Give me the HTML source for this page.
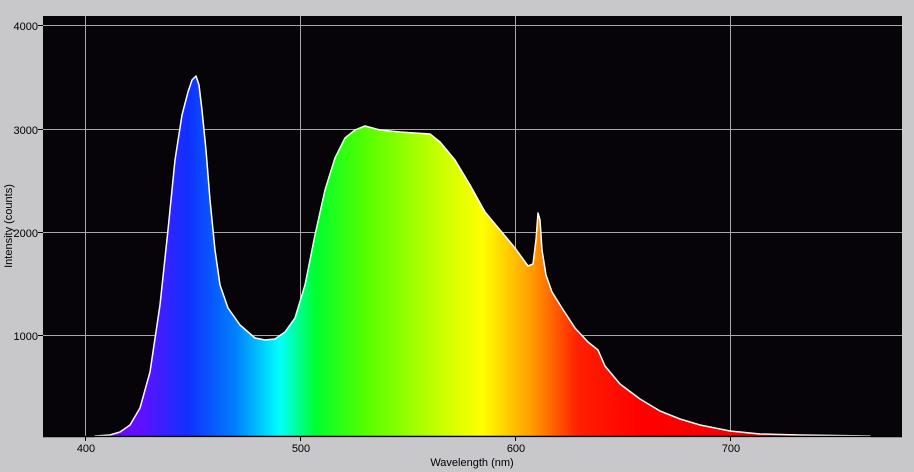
<!DOCTYPE html><html><head><style>body{margin:0;width:914px;height:472px;background:#c8c7c9;overflow:hidden}svg{display:block;font-family:"Liberation Sans",sans-serif}</style></head><body>
<svg width="914" height="472" viewBox="0 0 914 472">
<defs><linearGradient id="g" gradientUnits="userSpaceOnUse" x1="85" y1="0" x2="880" y2="0">
<stop offset="0" stop-color="#7a00ff"/>
<stop offset="0.07" stop-color="#6010ff"/>
<stop offset="0.13" stop-color="#1030ff"/>
<stop offset="0.19" stop-color="#0080ff"/>
<stop offset="0.245" stop-color="#00ffff"/>
<stop offset="0.29" stop-color="#00ff30"/>
<stop offset="0.35" stop-color="#50ff00"/>
<stop offset="0.44" stop-color="#c0ff00"/>
<stop offset="0.50" stop-color="#ffff00"/>
<stop offset="0.56" stop-color="#ffa000"/>
<stop offset="0.62" stop-color="#ff2000"/>
<stop offset="0.70" stop-color="#ff0000"/>
<stop offset="1" stop-color="#e00000"/>
</linearGradient></defs>
<rect x="43" y="16" width="859" height="421" fill="#060408"/>
<g stroke="#a8a8a8" stroke-width="1">
<line x1="43" y1="25.5" x2="902" y2="25.5"/><line x1="43" y1="129.5" x2="902" y2="129.5"/><line x1="43" y1="232.5" x2="902" y2="232.5"/><line x1="43" y1="335.5" x2="902" y2="335.5"/>
<line x1="85.5" y1="16" x2="85.5" y2="437"/><line x1="300.5" y1="16" x2="300.5" y2="437"/><line x1="515.5" y1="16" x2="515.5" y2="437"/><line x1="730.5" y1="16" x2="730.5" y2="437"/>
</g>
<path d="M95 436 L110 435 L120 432 L130 425 L140 408 L150 372 L160 305 L168 230 L175 160 L182 115 L188 92 L192 80 L196 76 L199 85 L202 110 L206 150 L210 200 L215 250 L220 285 L228 308 L240 325 L255 338 L265 340 L275 339 L285 332 L295 318 L305 285 L315 235 L325 190 L335 158 L345 138 L355 130 L365 126 L380 130 L400 132 L430 134 L440 142 L455 160 L470 185 L485 212 L500 230 L515 248 L528 266 L533 264 L536 240 L538 213 L540 220 L542 250 L546 275 L552 292 L562 308 L575 328 L588 342 L598 350 L605 366 L620 384 L640 399 L660 411 L680 419 L700 425 L730 431 L760 434 L800 435 L870 436 L870 437 L95 437 Z" fill="url(#g)" stroke="#fff" stroke-width="1.5" stroke-linejoin="round"/>
<line x1="43" y1="436.5" x2="902" y2="436.5" stroke="#000" stroke-width="1.5"/>
<g stroke="#000"><line x1="38" y1="25.5" x2="43" y2="25.5"/><line x1="38" y1="129.5" x2="43" y2="129.5"/><line x1="38" y1="232.5" x2="43" y2="232.5"/><line x1="38" y1="335.5" x2="43" y2="335.5"/>
<line x1="85.5" y1="437" x2="85.5" y2="441"/><line x1="300.5" y1="437" x2="300.5" y2="441"/><line x1="515.5" y1="437" x2="515.5" y2="441"/><line x1="730.5" y1="437" x2="730.5" y2="441"/></g>
<g font-size="11" fill="#000" text-anchor="end"><text x="38" y="30">4000</text><text x="38" y="134">3000</text><text x="38" y="237">2000</text><text x="38" y="340">1000</text></g>
<g font-size="11" fill="#000" text-anchor="middle"><text x="86" y="452">400</text><text x="301" y="452">500</text><text x="516" y="452">600</text><text x="731" y="452">700</text>
<text x="472" y="466">Wavelength (nm)</text>
<text transform="translate(12,226) rotate(-90)">Intensity (counts)</text></g>
</svg></body></html>
